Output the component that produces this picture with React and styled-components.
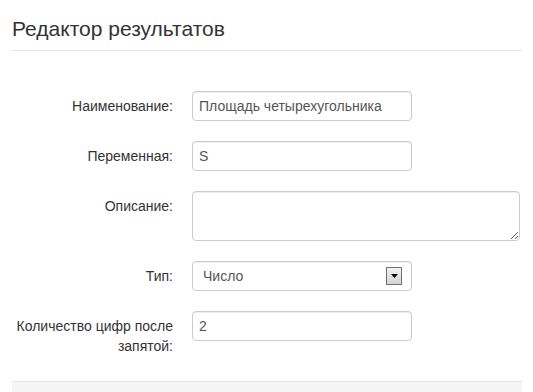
import React from "react";
import styled, { createGlobalStyle } from "styled-components";

const GlobalStyle = createGlobalStyle`
  body {
    margin: 0;
    background: #ffffff;
    font-family: "Liberation Sans", Arial, sans-serif;
    font-size: 14px;
    line-height: 20px;
    color: #333333;
  }
`;

const Modal = styled.div`
  margin: 0 11px 0 12px;
  height: 392px;
  overflow: hidden;
  display: flex;
  flex-direction: column;
`;

const Header = styled.div`
  padding: 16px 0 8px;
  border-bottom: 1px solid #e5e5e5;
`;

const Title = styled.h4`
  margin: 0;
  font-size: 21px;
  font-weight: normal;
  line-height: 26px;
  color: #333333;
`;

const Body = styled.form`
  padding: 40px 0 0;
  display: flex;
  flex-direction: column;
  gap: 20px;
`;

const Row = styled.div`
  display: grid;
  grid-template-columns: 161px 1fr;
  column-gap: 19px;
  align-items: start;
`;

const Label = styled.label`
  display: block;
  padding-top: 5px;
  text-align: right;
  color: #333333;
  line-height: 20px;
`;

const fieldBase = `
  box-sizing: border-box;
  border: 1px solid #cccccc;
  border-radius: 4px;
  background: #ffffff;
  box-shadow: inset 0 1px 1px rgba(0, 0, 0, 0.075);
  font-family: "Liberation Sans", Arial, sans-serif;
  font-size: 14px;
  line-height: 20px;
  color: #555555;
`;

const Input = styled.input`
  ${fieldBase}
  display: block;
  width: ${(p) => p.$width || 220}px;
  height: 30px;
  padding: 4px 6px;
  outline: none;
`;

const TextArea = styled.textarea`
  ${fieldBase}
  display: block;
  width: 328px;
  height: 50px;
  padding: 4px 6px;
  resize: vertical;
  outline: none;
`;

const SelectBox = styled.div`
  ${fieldBase}
  width: 220px;
  height: 30px;
  display: flex;
  align-items: center;
  padding: 0 9px 0 6px;
`;

const NativeSelect = styled.select`
  flex: 1;
  appearance: none;
  -webkit-appearance: none;
  border: 0;
  background: transparent;
  padding: 0 0 0 4px;
  font-family: inherit;
  font-size: 14px;
  color: #555555;
  outline: none;
`;

const ArrowButton = styled.span`
  box-sizing: border-box;
  width: 16px;
  height: 18px;
  border: 1px solid #707070;
  background: linear-gradient(#f2f2f2, #d4d4d4);
  display: flex;
  align-items: center;
  justify-content: center;
`;

const Footer = styled.div`
  margin-top: 25px;
  flex: 1;
  background: #f5f5f5;
  border-top: 1px solid #e5e5e5;
`;

const App = () => (
  <>
    <GlobalStyle />
    <Modal>
      <Header>
        <Title>Редактор результатов</Title>
      </Header>
      <Body>
        <Row>
          <Label htmlFor="name">Наименование:</Label>
          <Input id="name" defaultValue="Площадь четырехугольника" />
        </Row>
        <Row>
          <Label htmlFor="variable">Переменная:</Label>
          <Input id="variable" defaultValue="S" />
        </Row>
        <Row>
          <Label htmlFor="description">Описание:</Label>
          <TextArea id="description" />
        </Row>
        <Row>
          <Label htmlFor="type">Тип:</Label>
          <SelectBox>
            <NativeSelect id="type" defaultValue="number">
              <option value="number">Число</option>
              <option value="string">Строка</option>
            </NativeSelect>
            <ArrowButton>
              <svg width="7" height="4" viewBox="0 0 7 4">
                <path d="M0 0 H7 L3.5 4 Z" fill="#000" />
              </svg>
            </ArrowButton>
          </SelectBox>
        </Row>
        <Row>
          <Label htmlFor="digits">Количество цифр после запятой:</Label>
          <Input id="digits" defaultValue="2" />
        </Row>
      </Body>
      <Footer />
    </Modal>
  </>
);

export default App;
